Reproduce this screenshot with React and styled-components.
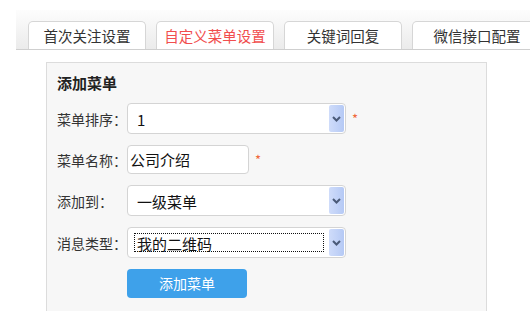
import styled, { createGlobalStyle } from 'styled-components';

const GlobalStyle = createGlobalStyle`
  body {
    margin: 0;
    background: #fff;
    font-family: "Noto Sans CJK SC", "Liberation Sans", sans-serif;
    color: #333;
  }
`;

const tabs = ['首次关注设置', '自定义菜单设置', '关键词回复', '微信接口配置'];

const Chevron = () => (
  <svg width="9" height="6" viewBox="0 0 9 6">
    <path d="M1 1 L4.5 4.5 L8 1" fill="none" stroke="#4a5a78" strokeWidth="2" />
  </svg>
);

const Select = ({ value, focused }) => (
  <SelectBox>
    <SelectValue $focused={focused}>{value}</SelectValue>
    <ArrowBox>
      <Chevron />
    </ArrowBox>
  </SelectBox>
);

export default function App() {
  return (
    <Page>
      <GlobalStyle />
      <TabBar>
        {tabs.map((t, i) => (
          <Tab key={t} $active={i === 1} $wide={i === 3}>
            {t}
          </Tab>
        ))}
      </TabBar>
      <Panel>
        <Title>添加菜单</Title>
        <Form>
          <Row>
            <Label>菜单排序：</Label>
            <Select value="1" />
            <Star>*</Star>
          </Row>
          <Row>
            <Label>菜单名称：</Label>
            <TextInput>公司介绍</TextInput>
            <Star>*</Star>
          </Row>
          <Row>
            <Label>添加到：</Label>
            <Select value="一级菜单" />
          </Row>
          <Row>
            <Label>消息类型：</Label>
            <Select value="我的二维码" focused />
          </Row>
          <Row>
            <Label />
            <Button>添加菜单</Button>
          </Row>
        </Form>
      </Panel>
    </Page>
  );
}

const Page = styled.div`
  padding: 10px 0 0 16px;
  width: 514px;
  height: 301px;
  overflow: hidden;
`;

const TabBar = styled.div`
  display: flex;
  align-items: flex-end;
  gap: 10px;
  height: 39px;
  padding-left: 12px;
  background: linear-gradient(#fdfdfd, #ebebeb);
  border-bottom: 1px solid #cfcfcf;
  white-space: nowrap;
`;

const Tab = styled.div`
  flex: 0 0 auto;
  width: ${p => (p.$wide ? '128px' : '116px')};
  height: 27px;
  line-height: 27px;
  text-align: center;
  font-size: 14.5px;
  background: #fff;
  border: 1px solid #d6d6d6;
  border-bottom: none;
  border-radius: 5px 5px 0 0;
  color: ${p => (p.$active ? '#f14e4e' : '#333')};
`;

const Panel = styled.div`
  margin: 12px 0 0 30px;
  width: 441px;
  height: 260px;
  background: #f7f7f7;
  border: 1px solid #dcdcdc;
  padding: 10px 0 0 10px;
  box-sizing: border-box;
`;

const Title = styled.div`
  font-size: 15px;
  font-weight: bold;
  line-height: 20px;
  color: #222;
`;

const Form = styled.div`
  display: flex;
  flex-direction: column;
  gap: 11px;
  margin-top: 10px;
`;

const Row = styled.div`
  display: flex;
  align-items: center;
`;

const Label = styled.div`
  width: 70px;
  font-size: 14px;
  color: #333;
`;

const SelectBox = styled.div`
  display: flex;
  align-items: stretch;
  width: 219px;
  height: 31px;
  box-sizing: border-box;
  background: #fff;
  border: 1px solid #d4d4d4;
  border-radius: 4px;
  padding: 1px;
`;

const SelectValue = styled.div`
  flex: 1;
  display: flex;
  align-items: center;
  margin: 4px 5px 4px 5px;
  padding-left: 2px;
  padding-top: 2px;
  font-size: 15px;
  color: #111;
  border: 1px ${p => (p.$focused ? 'dotted #111' : 'solid transparent')};
`;

const ArrowBox = styled.div`
  width: 15px;
  display: flex;
  align-items: center;
  justify-content: center;
  background: linear-gradient(90deg, #cfdcfa, #b5c9f5);
  border-radius: 2px;
`;

const TextInput = styled.div`
  width: 122px;
  height: 29px;
  box-sizing: border-box;
  display: flex;
  align-items: center;
  padding-left: 2px;
  font-size: 15px;
  color: #111;
  background: #fff;
  border: 1px solid #d4d4d4;
  border-radius: 4px;
`;

const Star = styled.span`
  margin-left: 6px;
  font-size: 13px;
  color: #f0683c;
`;

const Button = styled.div`
  width: 120px;
  height: 29px;
  line-height: 29px;
  text-align: center;
  background: #3ea1ea;
  color: #fff;
  font-size: 14px;
  border-radius: 4px;
`;
